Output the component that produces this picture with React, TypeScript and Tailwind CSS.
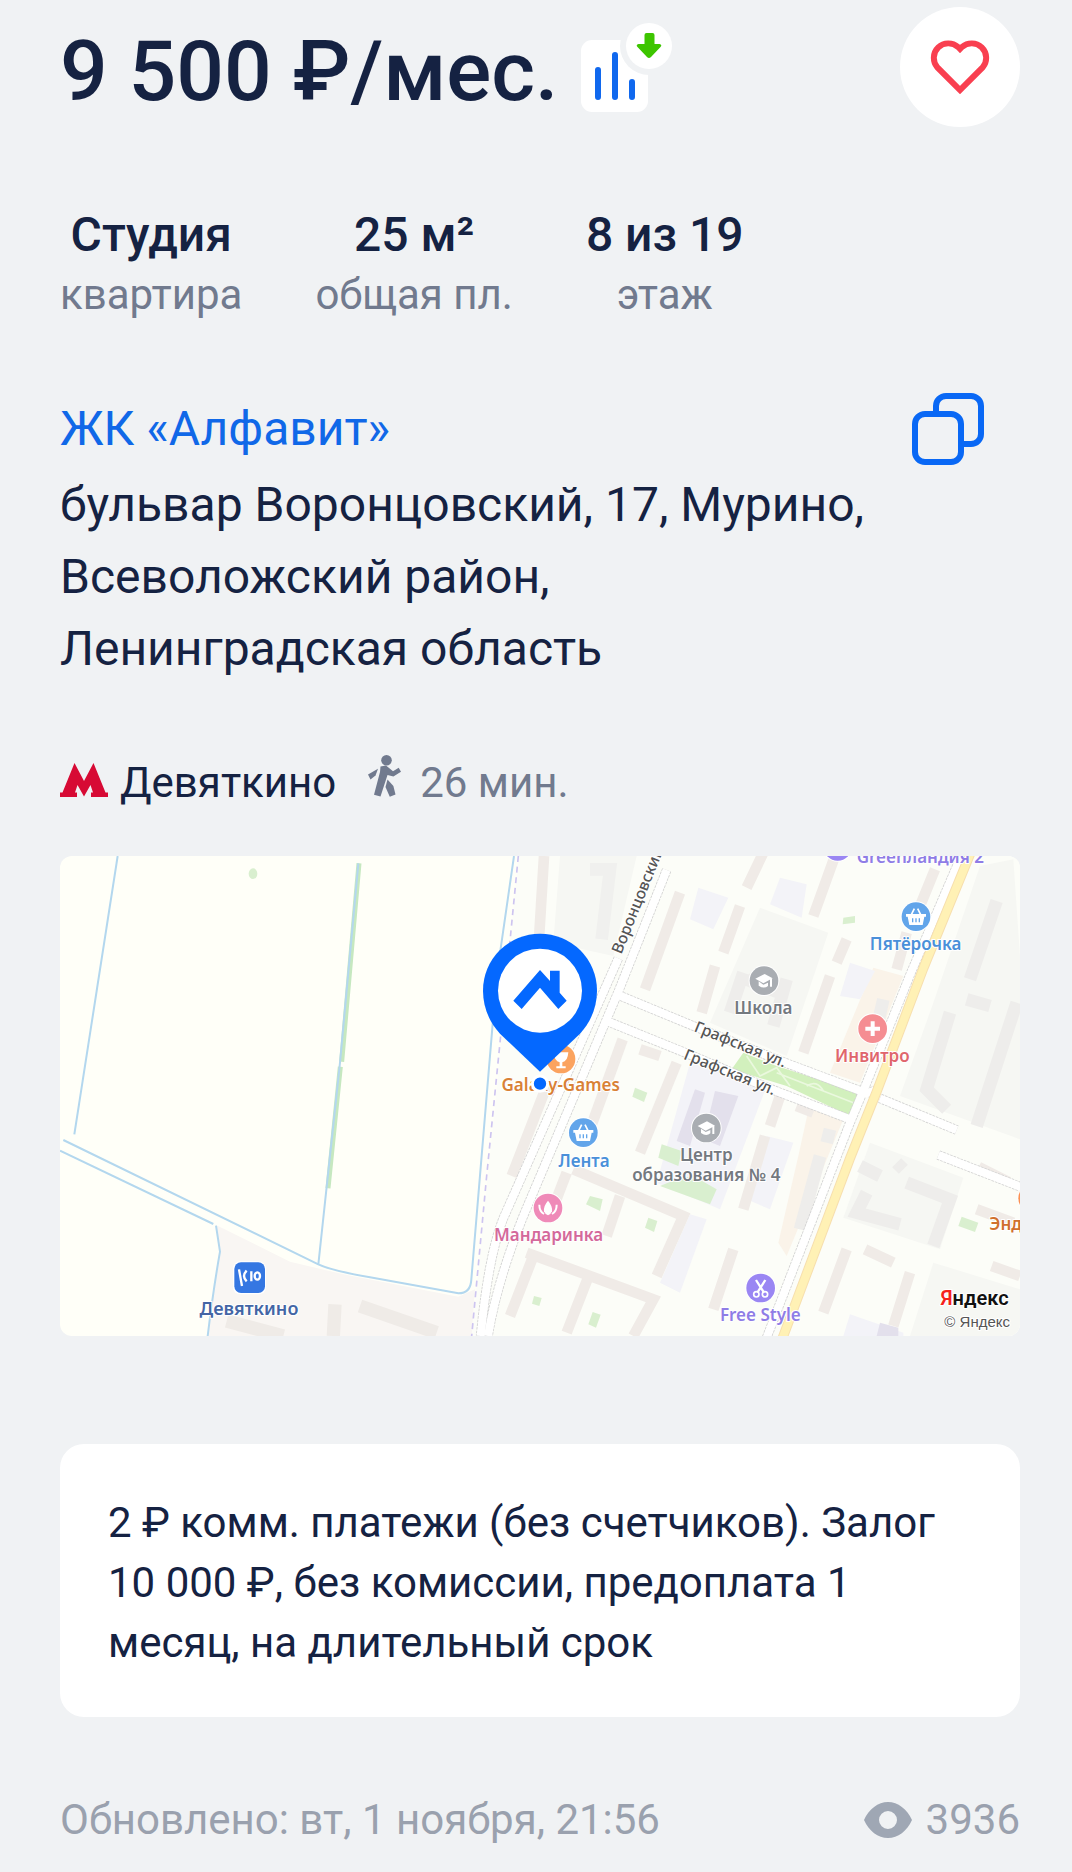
import type { ReactNode } from 'react';

const stats = [
  { value: 'Студия', label: 'квартира' },
  { value: '25 м²', label: 'общая пл.' },
  { value: '8 из 19', label: 'этаж' },
];

const App = () => {
  return (
    <main className="min-h-screen bg-[#f0f2f4] px-15 pt-[7px] pb-5 font-['Roboto',sans-serif] text-[#152242]">
      <div className="-mr-2 flex flex-col gap-17">
        <PriceRow />
        <Stats />
        <Address />
        <div className="flex flex-col gap-[43px]">
          <Metro />
          <Map />
        </div>
      </div>
      <p className="mt-[108px] -mr-2 rounded-3xl bg-white px-12 pt-[49px] pb-11 text-[42px] leading-15">
        2 ₽ комм. платежи (без счетчиков). Залог 10 000 ₽, без комиссии,
        предоплата 1 месяц, на длительный срок
      </p>
      <Footer />
    </main>
  );
};

const PriceRow = () => (
  <div className="flex items-start justify-between">
    <div className="flex items-start gap-[23px]">
      <h1 className="text-[84px] leading-[130px] font-medium whitespace-nowrap">
        9 500 ₽/мес.
      </h1>
      <button type="button" aria-label="История цены" className="mt-3.5">
        <svg width="92" height="92" viewBox="0 0 92 92">
          <rect y="19" width="67" height="72" rx="11" fill="#fff" />
          <g stroke="#1068ee" strokeWidth="6" strokeLinecap="round">
            <path d="M17 49V76M34 34V76M51 61V76" />
          </g>
          <circle cx="68" cy="25" r="29" fill="#f0f2f4" />
          <circle cx="68" cy="25" r="23" fill="#fff" />
          <path
            d="M64.500 12h7q2 0 2 2v9h5q3 1 1 3l-9.500 10q-2 2-4 0l-9.500-10q-2-2 1-3h6v-9q0-2 2-2z"
            fill="#3dc500"
          />
        </svg>
      </button>
    </div>
    <button
      type="button"
      aria-label="В избранное"
      className="flex size-30 items-center justify-center rounded-full bg-white">
      <svg width="60" height="54" viewBox="0 0 180 163">
        <path
          d="M90 27L84 21A44 44 0 0 0 21 82L90 151L159 82A44 44 0 0 0 96 21Z"
          fill="none"
          stroke="#f93f50"
          strokeWidth="18"
        />
      </svg>
    </button>
  </div>
);

const Stats = () => (
  <dl className="flex gap-[73px]">
    {stats.map(stat => (
      <div key={stat.label} className="flex flex-col-reverse text-center">
        <dt className="text-[42px] leading-15 text-[#717a8e]">{stat.label}</dt>
        <dd className="text-5xl leading-15 font-medium">{stat.value}</dd>
      </div>
    ))}
  </dl>
);

const Address = () => (
  <div className="flex items-start gap-6 pr-9">
    <div className="flex-1 text-5xl leading-18">
      <a href="#complex" className="block text-[#1068e8]">
        ЖК «Алфавит»
      </a>
      <address className="mt-1 not-italic">
        бульвар Воронцовский, 17, Мурино, Всеволожский район, Ленинградская
        область
      </address>
    </div>
    <button type="button" aria-label="Скопировать адрес">
      <svg
        width="72"
        height="72"
        viewBox="0 0 72 72"
        fill="none"
        stroke="#0968f5"
        strokeWidth="6">
        <rect x="3" y="21" width="46" height="48" rx="10" />
        <path d="M24 21V13a10 10 0 0 1 10-10H59a10 10 0 0 1 10 10V41a10 10 0 0 1-10 10H49" />
      </svg>
    </button>
  </div>
);

const Metro = () => (
  <div className="flex items-baseline text-[42px] leading-15">
    <svg width="48" height="34" viewBox="0 0 48 34" fill="#d70a34">
      <path d="M0 34V29.500H2.500L14.500 0L24 18L33.500 0L45.500 29.500H48V34H31V29.500H33L30.500 22L24 33.500L17.500 22L15 29.500H17V34Z" />
    </svg>
    <span className="ml-3">Девяткино</span>
    <svg
      width="34"
      height="42"
      viewBox="0 0 34 42"
      fill="#717a8e"
      className="-mb-1 ml-8">
      <circle cx="18.500" cy="5.300" r="5.300" />
      <path d="M10 13.700L0 19.500L2.500 24.500L7.500 20.500Z" />
      <path d="M12.500 11.500L18 10.500L25 16.300L30.700 12.700L33 16.700L25.400 21.500L19.500 20L12.500 41.500L6 39.800L12 17Z" />
      <path d="M19.500 24.500L25.400 31L27.500 39.500L21.800 41.700L17.500 32Z" />
    </svg>
    <span className="ml-[18px] text-[#717a8e]">26 мин.</span>
  </div>
);

const Footer = () => (
  <footer className="mt-[73px] -mr-2 flex items-center justify-between text-[42px] leading-15 text-[#9aa1ae]">
    <span>Обновлено: вт, 1 ноября, 21:56</span>
    <span className="flex items-center gap-3.5">
      <svg width="48" height="36" viewBox="0 0 48 36" fill="#9fa7b4">
        <path
          fillRule="evenodd"
          d="M0 18C5 7 14 0 24 0S43 7 48 18C43 29 34 36 24 36S5 29 0 18ZM24 9a9 9 0 1 0 0 18a9 9 0 1 0 0-18Z"
        />
      </svg>
      3936
    </span>
  </footer>
);

const roads = [
  'M1675 307L1330 1087Q1285 1200 1262 1440',
  'M1820 42L1675 407L1390 1080Q1310 1280 1284 1440',
  'M1675 417L1905 512L2180 622L2420 712L2455 700',
  'M1645 497L1880 592L2140 702L2370 790',
  'M2695 20L2550 357L2420 680L2370 800L2120 1445',
  'M2460 727L2690 822',
  'M2635 897L2885 994',
];

type PoiProps = {
  x: number;
  y: number;
  color: string;
  children?: ReactNode;
};

const Poi = ({ x, y, color, children }: PoiProps) => (
  <g transform={`translate(${x} ${y})`}>
    <circle r="46" fill="#fff" />
    <circle r="43" fill={color} />
    <g fill="#fff">{children}</g>
  </g>
);

const Basket = () => (
  <>
    <path d="M-30-8H30V0H25L20 25H-20L-25 0H-30Z" />
    <path
      d="M-14-6L-5-24M14-6L5-24"
      stroke="#fff"
      strokeWidth="5"
      fill="none"
    />
    <path d="M-10 5v12M0 5v12M10 5v12" stroke="#62a5ea" strokeWidth="4" />
  </>
);

const Cap = () => (
  <>
    <path d="M-26-6L2-20L26-7L-2 8Z" />
    <path d="M-16 2L-2 12L12 6V16Q0 26-16 15Z" />
    <path d="M21-6V18" stroke="#fff" strokeWidth="6" />
  </>
);

const Map = () => (
  <svg
    viewBox="0 0 2880 1440"
    role="img"
    aria-label="Карта района"
    className="block w-full rounded-xl font-['Noto_Sans',sans-serif] font-medium">
    <rect width="2880" height="1440" fill="#fffff8" />
    <path d="M1375 0H2880V1440H1235L1310 700Z" fill="#fcfdf8" />
    <path
      d="M468 1107L690 1217L850 1255L1195 1322L1245 1300L1235 1440H443L480 1187Z"
      fill="#f9f6f3"
    />

    {/* кварталы */}
    <g fill="#f6f7f3">
      <path d="M1500 0H1730L1660 300L1480 260Z" />
      <path d="M2100 155L2305 230L2180 600L1950 500Z" />
      <path d="M2760 30L2860 10L2880 300V850L2520 720L2620 440Z" />
      <path d="M2430 860L2710 965L2640 1180L2350 1085Z" />
      <path d="M2620 1220L2880 1300V1440H2550Z" />
    </g>
    <g fill="#faf3e9">
      <path d="M2440 335L2530 360L2400 680L2310 650Z" />
      <path d="M2250 740L2350 790L2180 1200L2155 1160L2215 900Z" />
    </g>
    <g fill="#f3f3f8">
      <path d="M1915 95L2005 125L1960 220L1890 190Z" />
      <path d="M2160 65L2240 85L2225 185L2130 145Z" />
      <path d="M2370 320L2445 345L2400 430L2340 420Z" />
      <path d="M1890 620L2120 690L1980 1060L1790 980Z" />
      <path d="M2120 840L2200 860L2130 1060L2060 1030Z" />
      <path d="M1890 1075L1940 1090L1860 1310L1800 1280Z" />
      <path d="M2370 1375L2530 1430V1440H2350Z" />
    </g>
    <g fill="#e3e0ec">
      <path d="M1905 700L1935 710L1890 870L1850 855Z" />
      <path d="M1965 705L2035 720L1980 870L1930 850Z" />
      <path d="M2460 1400L2515 1415V1440H2450Z" />
    </g>

    {/* дома */}
    <g fill="none" stroke="#f0ebe7" strokeWidth="32">
      <path d="M1452 0L1434 300" />
      <path d="M1860 110L1755 400" />
      <path d="M1688 550L1590 820" />
      <path d="M1460 690L1355 960M1740 580L1800 600" />
      <path d="M1850 620L1740 890" />
      <path d="M1540 940L1870 1080L1790 1260M1520 950L1470 1080M1680 1020L1640 1140" />
      <path d="M1400 1190L1780 1330L1720 1440M1420 1200L1350 1380M1590 1250L1520 1430" />
      <path d="M2110-10L2060 95M2040 150L1990 290M1965 330L1925 470" />
      <path d="M2325 0L2260 180M2360 250L2330 320M2310 360L2230 590" />
      <path d="M2625 40L2580 150M2540 230L2510 340" />
      <path d="M2160 720L2130 810M2115 840L2050 1060M2210 750L2260 770" />
      <path d="M2020 1180L1960 1360M2360 1180L2290 1370M2550 1250L2500 1410" />
      <path d="M2415 1180L2500 1220M2750 1060L2860 1100M2795 1230L2880 1260" />
      <path d="M2760 925L2850 970" strokeWidth="14" />
    </g>
    <g fill="none" stroke="#efebe7" strokeWidth="40">
      <path d="M825 1345L820 1440M900 1350L1130 1430M500 1395L670 1440" />
    </g>
    <g fill="none" stroke="#eeedeb" strokeWidth="38">
      <path d="M1590 40H1650L1625 250" stroke="#f0f0ee" />
      <path d="M2050 350L2010 470M2180 370L2140 510M2060 370L2180 420" />
      <path d="M2310 820L2300 860M2280 900L2220 1120M2470 430L2440 560" />
      <path d="M2810 135L2730 370M2870 440L2750 810M2670 470L2600 700L2660 760" />
      <path d="M2420 1010L2390 1070L2520 1105M2540 980L2670 1030L2620 1170" />
      <path d="M2720 430L2790 450M2400 930L2460 960M2510 920L2530 940" />
    </g>

    {/* зелень */}
    <g fill="#d9efcf">
      <ellipse cx="579" cy="53" rx="13" ry="16" />
      <path d="M1725 695L1762 710L1752 738L1717 722Z" />
      <path d="M1805 865L1865 885L1855 930L1795 905Z" />
      <path d="M1850 970L1900 960L1970 1000L1950 1045L1800 990Z" />
      <path d="M1590 1020L1628 1030L1620 1065L1578 1045Z" />
      <path d="M1765 1085L1792 1095L1782 1128L1755 1115Z" />
      <path d="M1422 1320L1445 1326L1438 1350L1416 1343Z" />
      <path d="M1598 1368L1622 1376L1608 1415L1585 1405Z" />
      <path d="M2350 185L2385 180V200L2348 205Z" />
      <path d="M2705 1082L2755 1100L2745 1128L2695 1110Z" />
    </g>
    <path
      d="M2050 590L2150 630L2400 710L2370 780L2180 690L2015 640Z"
      fill="#d2f0bd"
    />
    <path
      d="M2060 600L2100 660L2150 635L2190 690M2150 650L2380 740M2240 690Q2270 670 2290 705"
      fill="none"
      stroke="#eaf8de"
      strokeWidth="5"
    />
    <g fill="none" stroke="#c6e8c0" strokeWidth="15">
      <path d="M897 22L845 617M841 632L804 997" />
    </g>

    {/* каналы и железная дорога */}
    <g fill="none" stroke="#b3d7ee" strokeWidth="6">
      <path d="M173 0L43 835" />
      <path d="M10 852L775 1225Q820 1245 930 1264L1195 1312Q1232 1312 1234 1270L1310 360L1362 0" />
      <path d="M0 884L460 1104" />
      <path d="M468 1109L480 1187Q460 1300 443 1440" />
      <path d="M895 22L840 620L775 1225" />
    </g>
    <path
      d="M1375 0L1320 560L1280 960L1235 1440"
      fill="none"
      stroke="#cdc4f0"
      strokeWidth="5"
      strokeDasharray="18 14"
    />

    {/* дороги */}
    <g fill="none" stroke="#d2d2d2" strokeWidth="29" strokeDasharray="8 3">
      {roads.map(d => (
        <path key={d} d={d} />
      ))}
    </g>
    <g fill="none" stroke="#fff" strokeWidth="24">
      {roads.map(d => (
        <path key={d} d={d} />
      ))}
    </g>
    <g fill="none">
      <path
        d="M2732-10L2590 337L2450 707L2370 907L2168 1445"
        stroke="#f7dfae"
        strokeWidth="30"
      />
      <path
        d="M2732-10L2590 337L2450 707L2370 907L2168 1445"
        stroke="#fff1b5"
        strokeWidth="24"
      />
    </g>

    {/* значки */}
    <Poi x={1503} y={609} color="#fba35f">
      <path d="M-22-20H22Q20 8 4 10V22H14V28H-14V22H-4V10Q-20 8-22-20Z" />
    </Poi>
    <Poi x={1570} y={830} color="#62a5ea">
      <Basket />
    </Poi>
    <Poi x={2568} y={182} color="#62a5ea">
      <Basket />
    </Poi>
    <Poi x={1464} y={1056} color="#ef8ab8">
      <path d="M0-22Q14-6 12 10Q8 20 0 22Q-8 20-12 10Q-14-6 0-22Z" />
      <path
        d="M-26-10Q-26 10-12 18M26-10Q26 10 12 18"
        fill="none"
        stroke="#fff"
        strokeWidth="6"
      />
    </Poi>
    <Poi x={2112} y={374} color="#a9adb2">
      <Cap />
    </Poi>
    <Poi x={1939} y={816} color="#a9adb2">
      <Cap />
    </Poi>
    <Poi x={2438} y={518} color="#f58d92">
      <path d="M-6-22H6V-6H22V6H6V22H-6V6H-22V-6H-6Z" />
    </Poi>
    <Poi x={2102} y={1296} color="#9a86f3">
      <path
        d="M-14-24L10 14M14-24L-10 14"
        fill="none"
        stroke="#fff"
        strokeWidth="7"
      />
      <g fill="none" stroke="#fff" strokeWidth="5">
        <circle cx="-13" cy="19" r="8" />
        <circle cx="13" cy="19" r="8" />
      </g>
    </Poi>
    <Poi x={2333} y={-29} color="#9a86f3" />
    <Poi x={2918} y={1027} color="#fb9153" />
    <rect x="519" y="1216" width="99" height="99" rx="22" fill="#fff" />
    <rect x="523" y="1219" width="92" height="92" rx="20" fill="#3577e2" />
    <g fill="none" stroke="#fff" strokeWidth="7">
      <path d="M537 1240L546 1290M560 1244Q544 1260 560 1276M574 1246V1276" />
      <ellipse cx="592" cy="1260" rx="8" ry="11" />
    </g>

    {/* подписи */}
    <g
      textAnchor="middle"
      fontSize="51"
      fontWeight="600"
      stroke="#fff"
      strokeWidth="6"
      strokeLinejoin="round"
      paintOrder="stroke">
      <text x="567" y="1376" fill="#4365a5" fontSize="54">
        Девяткино
      </text>
      <text x="1502" y="706" fill="#d98136">
        Galaxy-Games
      </text>
      <text x="1572" y="934" fill="#4a90d9">
        Лента
      </text>
      <text x="1466" y="1154" fill="#d4699b">
        Мандаринка
      </text>
      <text x="2567" y="282" fill="#4a90d9">
        Пятёрочка
      </text>
      <text x="2110" y="475" fill="#74797f">
        Школа
      </text>
      <text x="2437" y="619" fill="#e0666c">
        Инвитро
      </text>
      <text x="1939" y="914" fill="#74797f">
        Центр
      </text>
      <text x="1939" y="974" fill="#74797f">
        образования № 4
      </text>
      <text x="2101" y="1395" fill="#8f7de6">
        Free Style
      </text>
      <text x="2581" y="21" fill="#8f7de6">
        Greenландия 2
      </text>
      <text x="2788" y="1123" fill="#d0702e" textAnchor="start">
        Эндорфин
      </text>
      <g fill="#555" fontSize="47" fontWeight="500" textAnchor="start">
        <text transform="translate(1684 296) rotate(-68)">Воронцовский</text>
        <text transform="translate(1900 525) rotate(22)">Графская ул.</text>
        <text transform="translate(1868 608) rotate(22)">Графская ул.</text>
      </g>
      <text
        x="2850"
        y="1413"
        fill="#555"
        fontSize="45"
        fontWeight="400"
        textAnchor="end"
        className="font-['Liberation_Sans',sans-serif]">
        © Яндекс
      </text>
      <text
        x="2846"
        y="1347"
        fill="#111"
        fontSize="60"
        textAnchor="end"
        className="font-['Roboto',sans-serif]">
        <tspan fill="#f5221b">Я</tspan>ндекс
      </text>
    </g>

    {/* метка дома */}
    <path
      d="M1440 647L1320 533C1287 498 1269 452 1269 404A171 171 0 0 1 1611 404C1611 452 1593 498 1560 533Z"
      fill="#0468ff"
    />
    <circle cx="1440" cy="404" r="126" fill="#fff" />
    <path
      d="M1360 434L1440 342L1470 375V344H1499V410L1520 434L1495 459L1440 395L1385 459Z"
      fill="#0468ff"
    />
    <circle
      cx="1440"
      cy="683"
      r="23"
      fill="#0468ff"
      stroke="#fff"
      strokeWidth="9"
    />
  </svg>
);

export default App;
